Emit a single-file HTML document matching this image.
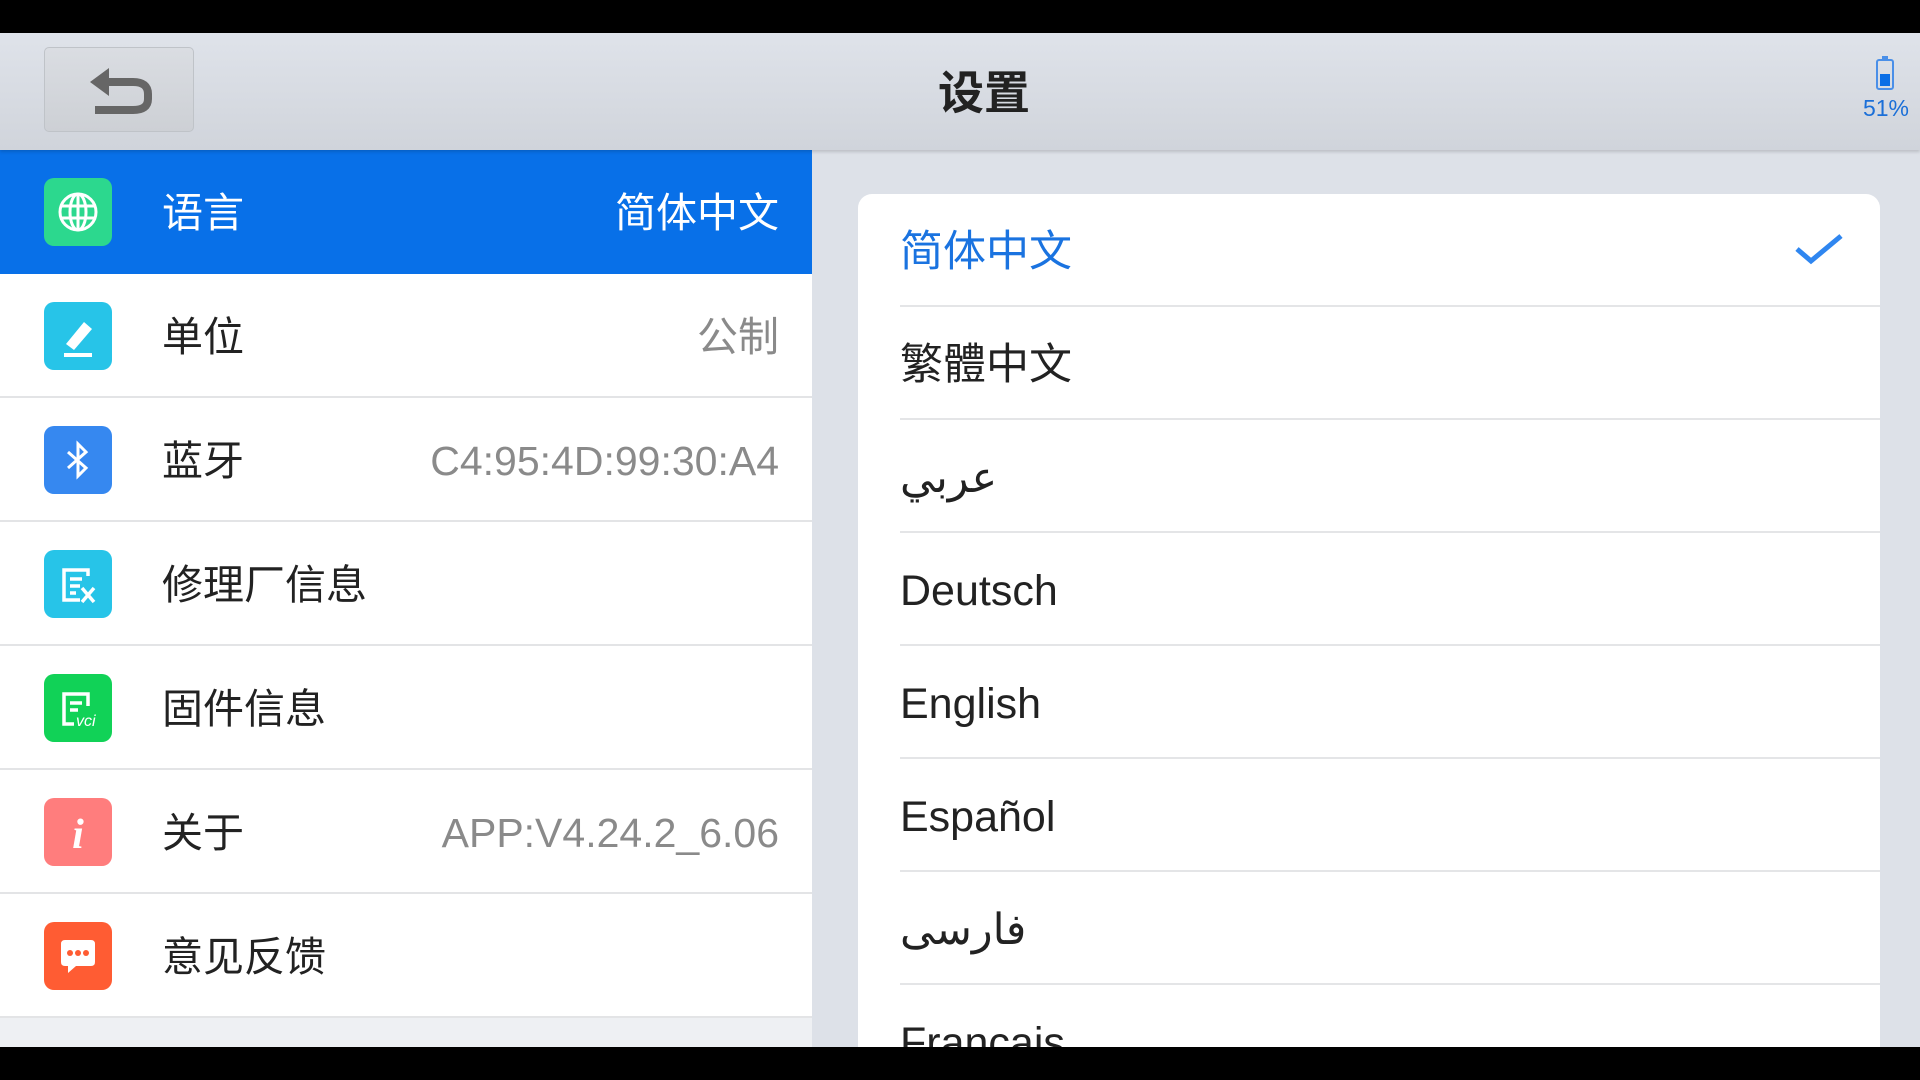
<!DOCTYPE html>
<html style="overflow:hidden"><head><meta charset="utf-8"><style>
*{margin:0;padding:0;box-sizing:border-box}
html,body{width:1920px;height:1080px;overflow:hidden}
body{background:#000;position:relative;font-family:"Liberation Sans","Noto Sans CJK SC",sans-serif}
.hdr{position:absolute;left:0;top:33px;width:1920px;height:117px;background:linear-gradient(#dfe3ea,#d0d4db);box-shadow:0 2px 3px rgba(0,0,0,.15);z-index:2}
.back{position:absolute;left:44px;top:14px;width:150px;height:85px;border:1px solid #bfc3c8;border-radius:5px;background:linear-gradient(#dadde2,#cdd0d5)}
.title{position:absolute;left:24px;width:1920px;top:24px;text-align:center;font-size:46px;color:#222;font-weight:bold}
.bat{position:absolute;left:1876px;top:26px;width:18px;height:31px;border:2px solid #4a8fe8;border-radius:3px}
.bat:before{content:"";position:absolute;left:4px;top:-5px;width:6px;height:3px;background:#4a8fe8}
.bat i{position:absolute;left:2px;right:2px;bottom:2px;height:12px;background:#0a6ee6}
.pct{position:absolute;left:1856px;top:62px;width:60px;text-align:center;font-size:23px;color:#1a6fd8}
.left{position:absolute;left:0;top:150px;width:812px;height:897px;background:#eef0f3;overflow:hidden}
.row{position:absolute;left:0;width:812px;height:124px;background:#fff;border-bottom:2px solid #e3e4e6}
.row .ic{position:absolute;left:44px;top:28px;width:68px;height:68px;border-radius:10px}
.row .lb{position:absolute;left:162px;top:38px;font-size:41px;color:#222;line-height:50px}
.row .vl{position:absolute;right:33px;top:38px;font-size:41px;color:#8a8a8a;line-height:50px}
.sel{background:#0870e8;border-bottom:none}
.sel .lb,.sel .vl{color:#fff}
.right{position:absolute;left:812px;top:150px;width:1108px;height:897px;background:#dde1e8;overflow:hidden}
.card{position:absolute;left:46px;top:44px;width:1022px;height:900px;background:#fff;border-radius:14px;overflow:hidden}
.it{position:absolute;left:42px;right:0;height:113px;border-bottom:2px solid #e4e5e7;font-size:43px;color:#222;line-height:116px}
</style></head><body>
<div class="hdr">
 <div class="back"><svg width="150" height="85" viewBox="0 0 150 85"><path d="M58 34H88Q103 34 103 46V51Q103 62 88 62H50" stroke="#666" stroke-width="8" fill="none"/><path d="M45 34L64 20V48Z" fill="#666"/></svg></div>
 <div class="title">设置</div>
 <div class="bat"><i></i></div>
 <div class="pct">51%</div>
</div>
<div class="left">
 <div class="row sel" style="top:0;height:124px"><div class="ic" style="background:#2cd88e"><svg width="68" height="68" viewBox="0 0 68 68" fill="none" stroke="#fff" stroke-width="3"><circle cx="34" cy="34" r="18"/><ellipse cx="34" cy="34" rx="8" ry="18"/><path d="M34 16V52M17 28H51M17 40H51"/></svg></div><div class="lb">语言</div><div class="vl">简体中文</div></div>
 <div class="row" style="top:124px"><div class="ic" style="background:#27c4e8"><svg width="68" height="68" viewBox="0 0 68 68"><path d="M22 42L40 20L48 27L30 48Z" fill="#fff"/><path d="M20 53H48" stroke="#fff" stroke-width="4"/></svg></div><div class="lb">单位</div><div class="vl">公制</div></div>
 <div class="row" style="top:248px"><div class="ic" style="background:#3688f0"><svg width="68" height="68" viewBox="0 0 68 68" fill="none" stroke="#fff" stroke-width="3"><path d="M24 26L42 42L34 50V18L42 26L24 42"/></svg></div><div class="lb">蓝牙</div><div class="vl">C4:95:4D:99:30:A4</div></div>
 <div class="row" style="top:372px"><div class="ic" style="background:#27c4e8"><svg width="68" height="68" viewBox="0 0 68 68" fill="none" stroke="#fff" stroke-width="3.5"><path d="M44 26V20H20V50H36M26 29H38M26 36H36M26 43H32M38 38L50 52M50 38L38 52"/></svg></div><div class="lb">修理厂信息</div></div>
 <div class="row" style="top:496px"><div class="ic" style="background:#11d257"><svg width="68" height="68" viewBox="0 0 68 68" fill="none" stroke="#fff" stroke-width="3.5"><path d="M44 32V20H20V50H30M26 29H38M26 36H34"/><text x="32" y="52" font-size="16" fill="#fff" stroke="none" font-style="italic" font-family="Liberation Sans">vci</text></svg></div><div class="lb">固件信息</div></div>
 <div class="row" style="top:620px"><div class="ic" style="background:#ff7d7d"><svg width="68" height="68" viewBox="0 0 68 68"><text x="34" y="50" text-anchor="middle" font-size="42" font-weight="bold" font-style="italic" fill="#fff" font-family="Liberation Serif">i</text></svg></div><div class="lb">关于</div><div class="vl">APP:V4.24.2_6.06</div></div>
 <div class="row" style="top:744px"><div class="ic" style="background:#ff5c33"><svg width="68" height="68" viewBox="0 0 68 68"><path d="M17 22Q17 18 21 18H47Q51 18 51 22V40Q51 44 47 44H32L24 51V44H21Q17 44 17 40Z" fill="#fff"/><circle cx="26" cy="31" r="3" fill="#ff5c33"/><circle cx="34" cy="31" r="3" fill="#ff5c33"/><circle cx="42" cy="31" r="3" fill="#ff5c33"/></svg></div><div class="lb">意见反馈</div></div>
</div>
<div class="right"><div class="card">
 <div class="it" style="top:0;color:#1a73e0">简体中文<svg style="position:absolute;right:36px;top:38px" width="50" height="34" viewBox="0 0 50 34"><path d="M3 17L17 29L47 4" stroke="#2f86f0" stroke-width="5" fill="none"/></svg></div>
 <div class="it" style="top:113px">繁體中文</div>
 <div class="it" style="top:226px">عربي</div>
 <div class="it" style="top:339px">Deutsch</div>
 <div class="it" style="top:452px">English</div>
 <div class="it" style="top:565px">Español</div>
 <div class="it" style="top:678px">فارسی</div>
 <div class="it" style="top:791px">Français</div>
</div></div>
<div style="position:absolute;left:0;top:1047px;width:1920px;height:33px;background:#000;z-index:5"></div>
</body></html>
